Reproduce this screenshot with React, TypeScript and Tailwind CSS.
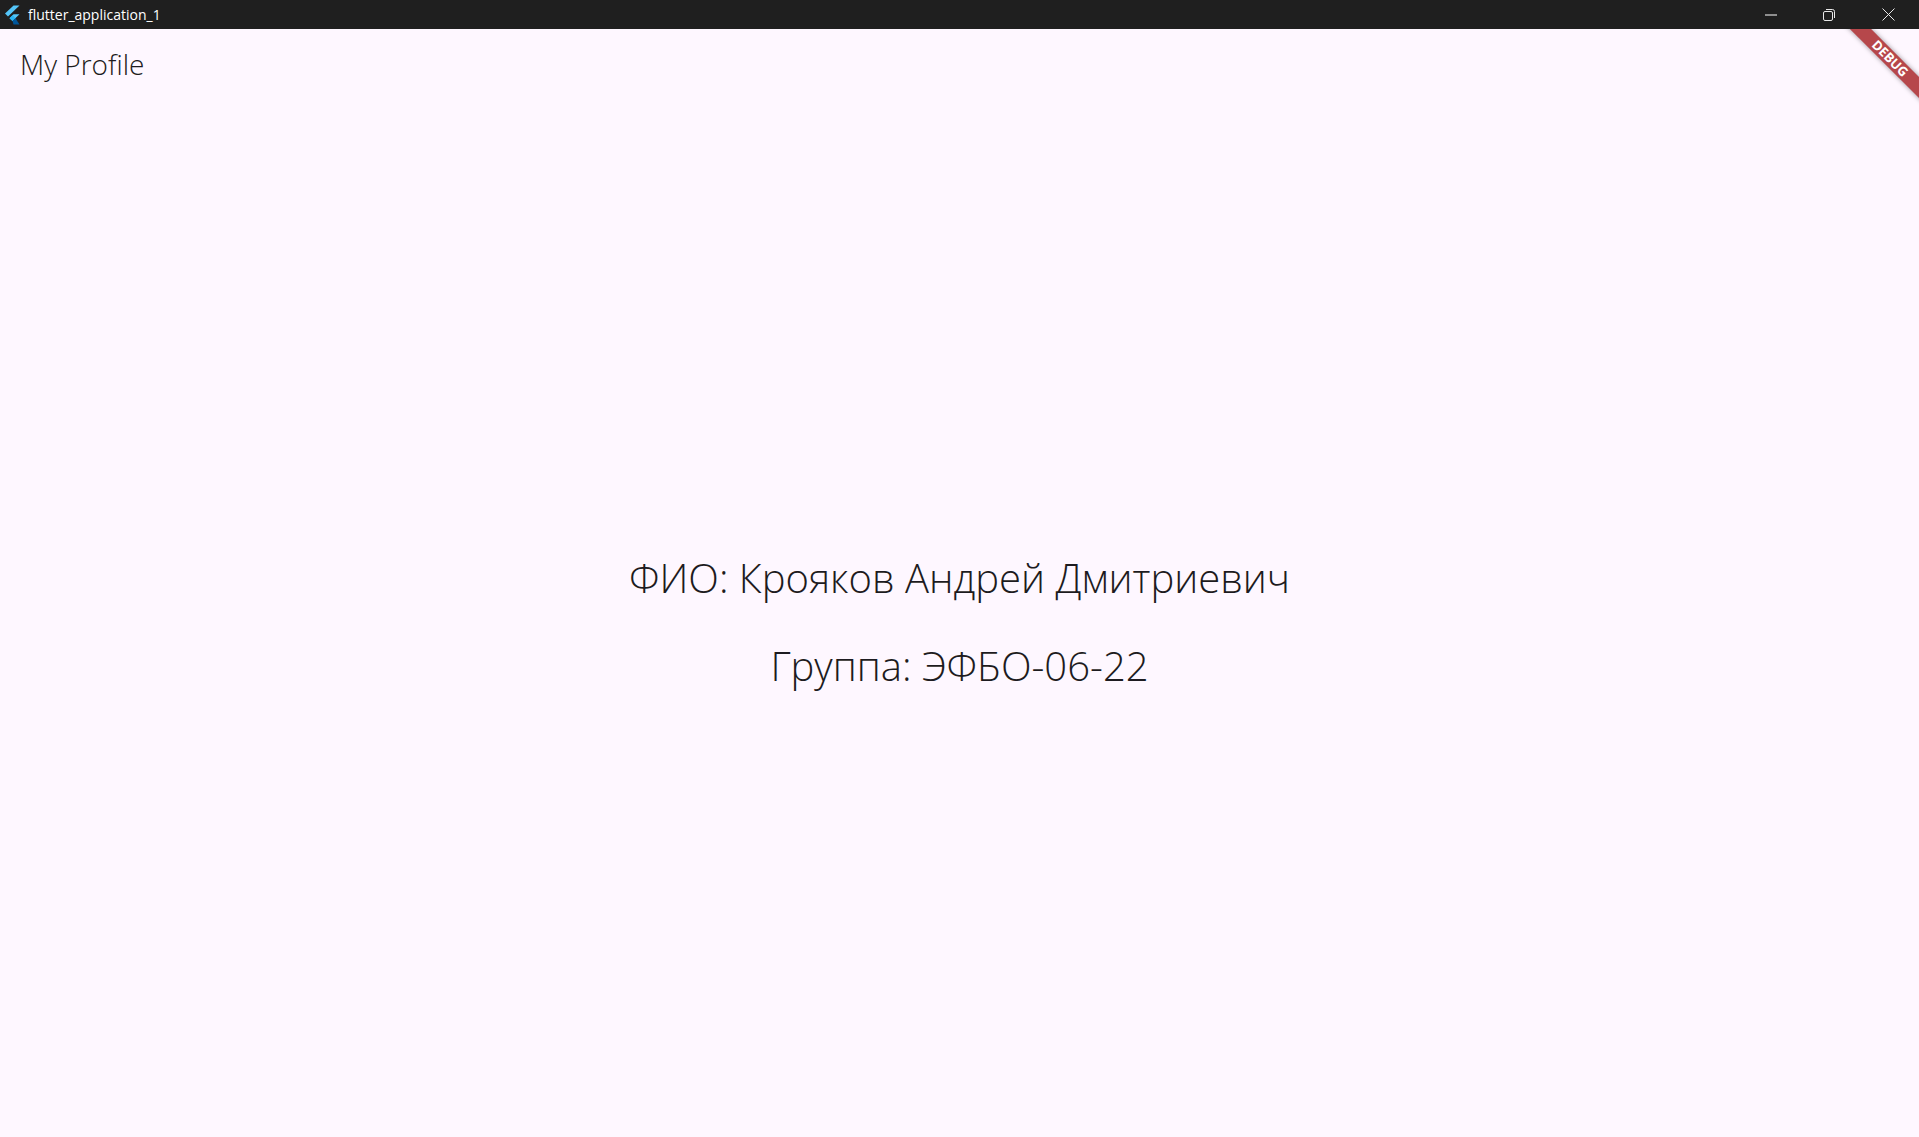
export default function App() {
  return (
    <div className="flex h-[1137px] w-[1919px] flex-col overflow-hidden bg-[#fef7ff] font-['Open_Sans','Noto_Sans',sans-serif] text-[#1d1b20]">
      {/* Title bar */}
      <header className="flex h-[29px] shrink-0 items-center justify-between bg-[#1f1f1f] text-white">
        <div className="flex items-center">
          <svg className="ml-[4px] h-[20px] w-[16px]" viewBox="0 0 16 20">
            <path d="M9.5 0.5h6L4 11.5 1 8.6z" fill="#54c5f8" />
            <path d="M15.5 9.2H9.5L5.5 13.2l3 2.9z" fill="#54c5f8" />
            <path d="M5.5 13.2l3-2.9 3 2.9-3 2.9z" fill="#29b6f6" />
            <path d="M8.5 16.1l3-2.9 4 6.3H9.5z" fill="#01579b" />
          </svg>
          <span className="ml-[8px] text-[14px] leading-none">flutter_application_1</span>
        </div>
        <div className="mr-[1px] flex h-full">
          <button className="flex w-[58px] items-center justify-center">
            <svg className="h-[12px] w-[12px]" viewBox="0 0 12 12">
              <path d="M0 6h12" stroke="#fff" strokeWidth="1" />
            </svg>
          </button>
          <button className="flex w-[58px] items-center justify-center">
            <svg className="h-[12px] w-[12px]" viewBox="0 0 12 12" fill="none" stroke="#e8e8e8" strokeWidth="1">
              <rect x="0.5" y="2.5" width="9" height="9" rx="1.5" />
              <path d="M3 0.5h6.5a2 2 0 0 1 2 2V9" />
            </svg>
          </button>
          <button className="flex w-[60px] items-center justify-center">
            <svg className="h-[13px] w-[13px]" viewBox="0 0 13 13">
              <path d="M0.5 0.5l12 12M12.5 0.5l-12 12" stroke="#e8e8e8" strokeWidth="1" />
            </svg>
          </button>
        </div>
      </header>

      <main className="relative flex min-h-0 flex-1 flex-col overflow-hidden">
        {/* App bar */}
        <div className="flex h-[72px] shrink-0 items-center px-[20px] pb-[2px]">
          <h1 className="text-[28px] font-[350] leading-none">My Profile</h1>
        </div>

        {/* Body */}
        <div className="flex flex-1 flex-col items-center justify-center gap-[44px] pt-[6px] text-[40px] font-[350] leading-[44px]">
          <p>ФИО: Крояков Андрей Дмитриевич</p>
          <p>Группа: ЭФБО-06-22</p>
        </div>

        {/* Debug banner */}
        <div className="absolute right-[-31px] top-[22px] flex h-[15px] w-[120px] rotate-45 items-center justify-center bg-[#b6474b] text-[13px] font-bold leading-none text-white shadow-[0_0_5px_rgba(0,0,0,0.4)]">
          DEBUG
        </div>
      </main>
    </div>
  )
}
